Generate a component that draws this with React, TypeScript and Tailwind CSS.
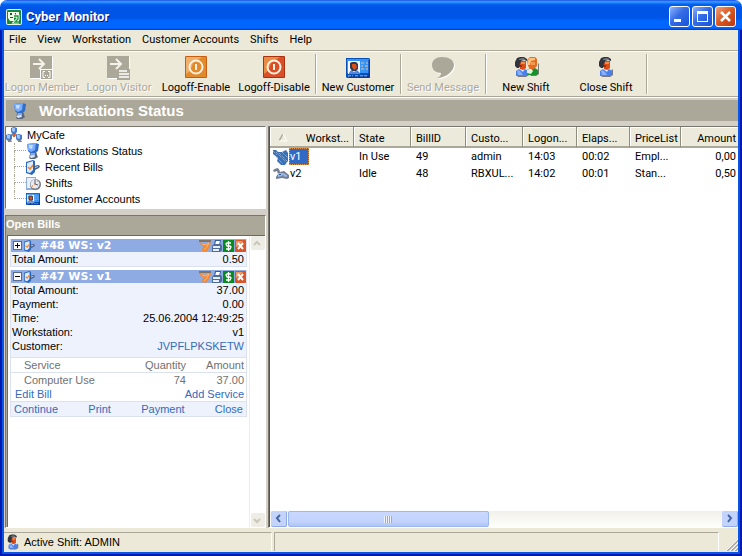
import React from 'react';
import clsx from 'clsx';

const PersonIcon = ({ className }: { className?: string }) => (
  <svg viewBox="0 0 16 20" className={className} aria-hidden="true">
    <path d="M4 20l-1-2 9-1 2-5 1 1v5l-3 2z" fill="#777a80" />
    <path d="M2 19v-5l3-2 3 2 3-2 3 2v4l-3 1z" fill="#4a80ea" />
    <path d="M3 14l2-1 2 2 2 3H4z" fill="#86b0ff" />
    <path d="M5 4h7v7l-3 2-3-1z" fill="#d94e16" />
    <path d="M7 5h4v2H7z" fill="#f38a48" />
    <path d="M5 8h3v2H5z" fill="#97300f" />
    <path d="M1 5l2-4 3-1h4l3 2v2l-3-1-3 1-1 3-1 4H3L1 9z" fill="#30343f" />
    <path d="M5 2l4-1 2 1v1H5z" fill="#777b83" />
    <path d="M7 13h3l-1 2z" fill="#e9f0ff" />
  </svg>
);

const BlondePersonIcon = ({ className }: { className?: string }) => (
  <svg viewBox="0 0 13 20" className={className} aria-hidden="true">
    <path d="M4 18l8-2V6l1 1v10l-3 2H5z" fill="#777a70" />
    <path d="M1 17v-4l3-2h5l3 2v4l-2 1H2z" fill="#16922a" />
    <path d="M1 13l4-2 2 3-2 3-4-1z" fill="#e4f2e0" />
    <path d="M1 3l3-3h5l2 2v7l-3 3H4L2 9z" fill="#e66b22" />
    <path d="M2 3l2-2h5v2l-4 1-1 4H2z" fill="#ffc27d" />
    <path d="M5 5h4v3H5z" fill="#f59a50" />
  </svg>
);

const MonitorIcon = ({ className }: { className?: string }) => (
  <svg viewBox="0 0 14 16" className={className} aria-hidden="true">
    <path d="M5 8h5l1 4 1 2-3 2H4l-1-2z" fill="#59657c" />
    <path d="M1 1l8-1 4 1-1 7-3 2H4L2 8z" fill="#326cc5" />
    <path d="M1 1l9-1-1 7-4 2-3-2z" fill="#79adff" />
    <path d="M3 2h4L6 6 3 5z" fill="#c6ddff" />
    <path d="M5 10h4v3H4z" fill="#86a8e4" />
    <path d="M3 13l5-1 1 2-4 1z" fill="#dce5f4" />
  </svg>
);

const NetworkIcon = ({ className }: { className?: string }) => (
  <svg viewBox="0 0 16 16" className={className} aria-hidden="true">
    <path d="M8 6L4 10M8 6l4 4" stroke="#7f8798" strokeWidth="2" />
    <path d="M5 1l3-1 3 1v4L9 7H7L5 5zM0 8l3-1 3 1v4l-2 2H2l-2-2zM10 8l3-1 3 1v4l-2 2h-2l-2-2z" fill="#4479cc" />
    <path d="M6 1h3v3L8 5 6 4zM1 8h3v3l-1 1-2-1zM11 8h3v3l-1 1-2-1z" fill="#9cc4ff" />
    <path d="M2 13h3l1 2H2zM12 13h3l1 2h-4z" fill="#7d8491" />
    <path d="M7 7h2v3H7z" fill="#df5a27" />
  </svg>
);

const BillIcon = ({ className }: { className?: string }) => (
  <svg viewBox="0 0 14 15" className={className} aria-hidden="true">
    <path d="M0 2l7-2 2 1v11l-3 3-6-2z" fill="#2867bd" />
    <path d="M1 3l6-2v9l-3 3-3-1z" fill="#dcebff" />
    <path d="M2 7l2 2 3-4" fill="none" stroke="#f18528" strokeWidth="1.5" />
    <path d="M7 9l1-3 4-1 2 1-1 2-4 2z" fill="#435d89" />
    <path d="M9 7l3-1v1L9 8z" fill="#c5dbff" />
  </svg>
);

const ClockIcon = ({ className }: { className?: string }) => (
  <svg viewBox="0 0 16 15" className={className} aria-hidden="true">
    <path d="M0 1h10v13H0z" fill="#8faddc" />
    <path d="M1 2h8v10H1z" fill="#e9f0fc" />
    <circle cx="9.5" cy="8.5" r="5.5" fill="#737983" />
    <circle cx="9" cy="8" r="4.5" fill="#e7e9ec" />
    <path d="M9 4v4l3 1" fill="none" stroke="#525e74" />
    <path d="M8 8h2M6 10h1M11 5h1" stroke="#ed6b24" />
  </svg>
);

const CardIcon = ({ className }: { className?: string }) => (
  <svg viewBox="0 0 24 20" preserveAspectRatio="none" className={className} aria-hidden="true">
    <path d="M0 0h23l1 1v19H1l-1-1z" fill="#0650b4" />
    <path d="M1 1h22v14H1z" fill="#3693f7" />
    <path d="M2 3h12v13H2z" fill="#f3f6fc" />
    <path d="M4 5l2-1h4l2 2v5l-2 2H6l-2-3z" fill="#303b50" />
    <path d="M6 6h4l1 4-3 2-2-3z" fill="#db5016" />
    <path d="M3 15l2-3 3 2 3-2 3 3v1H3z" fill="#5685dc" />
    <path d="M15 5h3M20 5h2M15 8h2M19 8h3M15 11h3M20 11h2" stroke="#edc28a" />
    <path d="M2 18h5M9 18h3M14 18h7" stroke="#bad7ff" strokeDasharray="3 1" />
    <path d="M23 2v17H3" fill="none" stroke="#052b91" />
  </svg>
);

const PowerIcon = ({ tone }: { tone: 'orange' | 'red' }) => (
  <svg viewBox="0 0 22 22" className="size-[22px]" aria-hidden="true">
    <rect width="22" height="22" rx="1" fill={tone === 'orange' ? '#c65f12' : '#a93210'} />
    <rect x="1" y="1" width="20" height="20" fill={tone === 'orange' ? '#e18b2d' : '#d95028'} />
    <path d="M1 1h16L8 7l-3 8-4 3z" fill={tone === 'orange' ? '#efb06d' : '#ea8c45'} />
    <circle cx="11" cy="11" r="6.5" fill="none" stroke="#fff0df" strokeWidth="2" />
    <path d="M11 8v6" stroke="#fff0df" strokeWidth="2" />
  </svg>
);

const LogonIcon = ({ visitor = false }: { visitor?: boolean }) => (
  <svg viewBox="0 0 24 24" className="size-6" aria-hidden="true">
    <path d="M1 1h22v22H1z" fill="#fff" />
    <path d="M0 0h22v22H0z" fill="#aca899" />
    <path d="M3 8h10M9 3l5 5-5 5" fill="none" stroke="#f5f3e8" strokeWidth="2" />
    {visitor ? (
      <>
        <path d="M10 13h13v11H10z" fill="#aca899" />
        <path d="M12 15h8M12 18h10M12 21h10" stroke="#fff" strokeWidth="1.5" />
      </>
    ) : (
      <>
        <path d="M10 13h13v11H10z" fill="#fff" />
        <path d="M11 14h11v9H11z" fill="#aca899" />
        <path d="M15 15.500h-2v6h2M18 15.500h2v6h-2M15 19.500h1M17 19.500h1" fill="none" stroke="#fff" />
      </>
    )}
  </svg>
);

const MessageIcon = () => (
  <svg viewBox="0 0 24 24" className="size-6" aria-hidden="true">
    <path d="M12 2c7 0 12 3 12 8 0 6-8 13-17 13 3-1 4-3 4-5-5 0-9-3-9-8s4-8 10-8z" fill="#fff" />
    <path d="M11 1c7 0 12 3 12 8 0 6-8 13-17 13 3-1 4-3 4-5-5 0-9-3-9-8s4-8 10-8z" fill="#aca899" />
  </svg>
);

const AppIcon = () => (
  <svg viewBox="0 0 16 16" className="size-4" aria-hidden="true">
    <rect width="16" height="16" rx="2" fill="#e7f5df" />
    <rect x="1" y="1" width="14" height="14" rx="1" fill="#138b37" />
    <path d="M2 3h11v5H8v4H4l-2-3z" fill="#f1fae9" />
    <path d="M4 4h2v2H4zM9 4h1v2H9zM4 8h3v1H4z" fill="#185c2b" />
    <path d="M8 7h4v3l-3 3h4" fill="none" stroke="#fff" strokeWidth="3" />
    <path d="M8 7h4v3l-3 3h4" fill="none" stroke="#149539" strokeWidth="1.3" />
  </svg>
);

const DeviceIcon = ({ active = false }: { active?: boolean }) => (
  <svg viewBox="0 0 16 16" className="size-4 shrink-0" aria-hidden="true">
    {active ? (
      <>
        <path d="M0 1h3l2 2h4l4-2 2 3v8l-3 4H8l-4-4 1-3-5-4z" fill="#3a70b8" />
        <path d="M0 2l4 4M3 3l11 11M6 4l8 8M9 3l6 6M3 8l7 7" stroke="#a6c2d9" strokeDasharray="1 1" />
      </>
    ) : (
      <>
        <path d="M0 4l4-2 2 1 1 3 4-1 5 4v3l-2 1-5-1-6 1v-2l2-3-1-3-3 1z" fill="#737d8d" />
        <path d="M5 7h5l4 2v2l-5-1-4 1z" fill="#98b9e8" />
        <path d="M9 9h2v1H9z" fill="#ec7936" />
        <path d="M6 8h2v1H6z" fill="#2e599c" />
      </>
    )}
  </svg>
);

const HandIcon = () => (
  <svg viewBox="0 0 12 12" className="size-3" aria-hidden="true">
    <path d="M0 0h12v2H0z" fill="#7c746d" />
    <path d="M0 2l3 1 3 1 5-2 1 1-2 5-3 4-4-1V9l2-2-3-2z" fill="#f28a35" />
    <path d="M3 4l3 1 4-2-2 4-3 3" fill="none" stroke="#ffb878" />
  </svg>
);

const PrinterIcon = () => (
  <svg viewBox="0 0 10 12" className="h-3 w-[10px]" aria-hidden="true">
    <path d="M3 0h6L8 5H2z" fill="#315c9e" />
    <path d="M4 1h4L7 5H3z" fill="#fff" />
    <path d="M0 6l2-2h7l1 2v4l-2 2H0z" fill="#506b94" />
    <path d="M1 6h7v2H1zM1 9h6v2H1z" fill="#e4edfb" />
  </svg>
);

const CashIcon = () => (
  <svg viewBox="0 0 11 12" className="h-3 w-[11px]" aria-hidden="true">
    <path d="M0 0h11v12H0z" fill="#098a20" />
    <path d="M8 3H4L3 4l1 2h3l1 1-1 2H3M5.500 1v10" fill="none" stroke="#fff" strokeWidth="1.300" />
  </svg>
);

const DismissIcon = () => (
  <svg viewBox="0 0 11 12" className="h-3 w-[11px]" aria-hidden="true">
    <rect width="11" height="12" rx="1" fill="#d85628" />
    <path d="M1 1h7L2 7H1z" fill="#ed9a60" />
    <path d="M3 3l5 6M8 3L3 9" stroke="#fff" strokeWidth="2" />
  </svg>
);

const Chevron = ({ path, color }: { path: string; color: string }) => (
  <svg viewBox="0 0 9 9" className="size-[9px]" aria-hidden="true">
    <path d={path} fill="none" stroke={color} strokeWidth="2" />
  </svg>
);

const menus = ['File', 'View', 'Workstation', 'Customer Accounts', 'Shifts', 'Help'];

type Tool = { label: string; icon: React.ReactNode; width: string; disabled?: boolean; divider?: boolean };

const tools: Tool[] = [
  { label: 'Logon Member', icon: <LogonIcon />, width: 'w-[74px]', disabled: true },
  { label: 'Logon Visitor', icon: <LogonIcon visitor />, width: 'w-[80px]', disabled: true },
  { label: 'Logoff-Enable', icon: <PowerIcon tone="orange" />, width: 'w-[74px]' },
  { label: 'Logoff-Disable', icon: <PowerIcon tone="red" />, width: 'w-[82px]', divider: true },
  { label: 'New Customer', icon: <CardIcon className="mt-[2px] h-5 w-6" />, width: 'w-[84px]', divider: true },
  { label: 'Send Message', icon: <MessageIcon />, width: 'w-[84px]', disabled: true, divider: true },
  {
    label: 'New Shift',
    icon: (
      <span className="flex pt-px">
        <PersonIcon className="h-5 w-4" />
        <BlondePersonIcon className="-ml-1 h-5 w-[13px]" />
      </span>
    ),
    width: 'w-[80px]',
  },
  { label: 'Close Shift', icon: <PersonIcon className="mt-px h-5 w-4" />, width: 'w-[80px]', divider: true },
];

const treeItems = [
  { label: 'Workstations Status', icon: <MonitorIcon className="h-4 w-[14px]" /> },
  { label: 'Recent Bills', icon: <BillIcon className="h-[15px] w-[14px]" /> },
  { label: 'Shifts', icon: <ClockIcon className="h-[15px] w-4" /> },
  { label: 'Customer Accounts', icon: <CardIcon className="h-3 w-[14px]" /> },
];

const columns = [
  { label: 'Workst...', width: 'w-[84px]' },
  { label: 'State', width: 'w-[57px]' },
  { label: 'BillID', width: 'w-[55px]' },
  { label: 'Custo...', width: 'w-[57px]' },
  { label: 'Logon...', width: 'w-[54px]' },
  { label: 'Elaps...', width: 'w-[53px]' },
  { label: 'PriceList', width: 'w-[51px]' },
  { label: 'Amount', width: 'w-auto' },
];

const rows = [
  ['v1', 'In Use', '49', 'admin', '14:03', '00:02', 'Empl...', '0,00'],
  ['v2', 'Idle', '48', 'RBXUL...', '14:02', '00:01', 'Stan...', '0,50'],
];

const TitleBar = () => (
  <header className="flex h-[30px] shrink-0 items-center rounded-t-[7px] bg-[linear-gradient(#0831d9_0,#3f96ff_1px,#2187ff_3px,#0562f0_4px,#0055e6_7px,#0055e6_18px,#0066ff_21px,#0066ff_28px,#0038cf_30px)] pt-[3px] pr-[6px] pl-[6px]">
    <AppIcon />
    <h1 className="ml-1 text-[13px] leading-4 font-bold text-white [text-shadow:1px_1px_#0a1883]">
      Cyber Monitor
    </h1>
    <div className="ml-auto flex gap-[2px]">
      {['Minimize', 'Maximize', 'Close'].map((name) => (
        <button
          key={name}
          aria-label={name}
          className={clsx(
            'flex size-[21px] items-center justify-center rounded-[3px] border border-white',
            name === 'Close'
              ? 'bg-[linear-gradient(135deg,#f0a07a,#d9571f_50%,#b93710)]'
              : 'bg-[linear-gradient(135deg,#8db2ff,#346be6_45%,#1754d8)]',
          )}
        >
          <svg viewBox="0 0 19 19" className="size-[19px]" aria-hidden="true">
            {name === 'Minimize' && <path d="M4 12h7v3H4z" fill="#fff" />}
            {name === 'Maximize' && <path d="M4 4h11v11H4zM5 7v7h9V7z" fill="#fff" fillRule="evenodd" />}
            {name === 'Close' && <path d="M5 5l9 9M14 5l-9 9" stroke="#fff" strokeWidth="2.500" />}
          </svg>
        </button>
      ))}
    </div>
  </header>
);

const Toolbar = () => (
  <div className="flex h-[44px] shrink-0 pt-[2px] pl-[1px]" role="toolbar">
    {tools.map((tool) => (
      <div
        key={tool.label}
        className={clsx('flex h-10', tool.divider && 'border-r border-[#aca899] shadow-[1px_0_white]')}
      >
        <button
          disabled={tool.disabled}
          className={clsx(
            'flex flex-col items-center justify-between pt-[2px] whitespace-nowrap',
            tool.width,
            tool.disabled && 'text-[#aca899] [text-shadow:1px_1px_white]',
          )}
        >
          {tool.icon}
          <span className="leading-[13px]">{tool.label}</span>
        </button>
      </div>
    ))}
  </div>
);

const NavTree = () => (
  <nav className="border border-[#77756c] border-r-white border-b-white bg-white pb-[1px] [font-family:'Liberation_Sans',Arial,sans-serif]">
    <div className="flex h-4 items-center gap-[5px]">
      <NetworkIcon className="size-4" />
      MyCafe
    </div>
    <ul className="ml-2">
      {treeItems.map((item, i) => (
        <li key={item.label} className="flex h-4 items-center">
          <span className="h-4 w-3">
            <span className="block h-2 border-b border-l border-dotted border-[#aca899]" />
            {i < treeItems.length - 1 && <span className="block h-2 border-l border-dotted border-[#aca899]" />}
          </span>
          <span className="flex w-[19px] justify-start">{item.icon}</span>
          <a href="#">{item.label}</a>
        </li>
      ))}
    </ul>
  </nav>
);

const Bill = ({ title, open = false, children }: { title: string; open?: boolean; children: React.ReactNode }) => (
  <article className="border border-t-0 border-[#dbe1ef] bg-[#eef2fd]">
    <header className="flex h-[13px] items-center bg-[#8eabe3]">
      <button
        aria-label={open ? 'Collapse' : 'Expand'}
        className="ml-[2px] flex size-[9px] items-center justify-center border border-[#5a6b8c] bg-white"
      >
        <svg viewBox="0 0 7 7" className="size-[7px]" aria-hidden="true">
          <path d={open ? 'M1 3h5v1H1z' : 'M1 3h5v1H1zM3 1h1v5H3z'} fill="#000" />
        </svg>
      </button>
      <BillIcon className="mx-[2px] h-3 w-[11px]" />
      <h3 className="ml-[3px] text-[11px] leading-3 font-bold text-white [font-family:'DejaVu_Sans',sans-serif]">
        {title}
      </h3>
      <div className="ml-auto flex gap-[1px]">
        <button aria-label="Continue"><HandIcon /></button>
        <button aria-label="Print"><PrinterIcon /></button>
        <button aria-label="Payment"><CashIcon /></button>
        <button aria-label="Close"><DismissIcon /></button>
      </div>
    </header>
    {children}
  </article>
);

const Field = ({ label, value, link = false }: { label: string; value: string; link?: boolean }) => (
  <div className="flex justify-between pr-[2px] pl-[1px]">
    <dt>{label}</dt>
    <dd>{link ? <a href="#" className="text-[#356abb]">{value}</a> : value}</dd>
  </div>
);

const OpenBills = () => (
  <section className="flex min-h-0 flex-1 flex-col border border-[#77756c] border-r-white border-b-white bg-[#aca899] [font-family:'Liberation_Sans',Arial,sans-serif]">
    <h2 className="pb-[3px] text-[11px] leading-4 font-bold text-white">Open Bills</h2>
    <div className="ml-[1px] flex min-h-0 flex-1 border-t border-l border-[#6b6961] bg-white">
      <div className="min-w-0 flex-1 space-y-[3px] pt-[3px] pr-[2px] pl-[2px] leading-[14px]">
        <Bill title="#48 WS: v2">
          <dl>
            <Field label="Total Amount:" value="0.50" />
          </dl>
        </Bill>
        <Bill title="#47 WS: v1" open>
          <dl className="pb-1">
            <Field label="Total Amount:" value="37.00" />
            <Field label="Payment:" value="0.00" />
            <Field label="Time:" value="25.06.2004 12:49:25" />
            <Field label="Workstation:" value="v1" />
            <Field label="Customer:" value="JVPFLPKSKETW" link />
          </dl>
          <table className="w-full table-fixed border-collapse bg-white text-right text-[#717171]">
            <thead>
              <tr className="h-[15px] border-y border-[#dbe1ef]">
                <th className="pl-[13px] text-left font-normal">Service</th>
                <th className="w-[60px] font-normal">Quantity</th>
                <th className="w-[60px] pr-[2px] font-normal">Amount</th>
              </tr>
            </thead>
            <tbody>
              <tr>
                <td className="pl-[13px] text-left">Computer Use</td>
                <td>74</td>
                <td className="pr-[2px]">37.00</td>
              </tr>
            </tbody>
          </table>
          <div className="flex justify-between bg-white pr-[2px] pl-1 text-[#356abb]">
            <a href="#">Edit Bill</a>
            <a href="#">Add Service</a>
          </div>
          <div className="flex justify-between border-t border-[#dbe1ef] pr-[3px] pl-[3px] text-[#356abb]">
            <a href="#">Continue</a>
            <a href="#">Print</a>
            <a href="#">Payment</a>
            <a href="#">Close</a>
          </div>
        </Bill>
      </div>
      <div className="flex w-[16px] flex-col justify-between border-l border-[#eeede5]">
        {['M1 6l3-3 3 3', 'M1 3l3 3 3-3'].map((path) => (
          <button
            key={path}
            aria-label={path.startsWith('M1 6') ? 'Scroll up' : 'Scroll down'}
            className="mx-auto flex size-[14px] items-center justify-center rounded-[2px] bg-[#eeede5]"
          >
            <Chevron path={path} color="#c9c7ba" />
          </button>
        ))}
      </div>
    </div>
  </section>
);

const WorkstationList = () => (
  <section className="flex min-w-0 flex-1 border border-r-0 border-[#77756c] border-b-white bg-white">
    <div className="flex min-w-0 flex-1 flex-col border-l border-[#55534c]">
      <table className="w-full table-fixed border-separate border-spacing-0 text-left">
        <thead>
          <tr className="h-[21px] bg-[#ebeadb]">
            {columns.map((column, i) => (
              <th
                key={column.label}
                className={clsx(
                  'border-r border-b-2 border-r-[#8f8c80] border-b-[#aca899] pt-[3px] font-normal whitespace-nowrap shadow-[inset_1px_1px_white]',
                  column.width,
                  i === 7 ? 'border-r-0 pr-[2px] text-right' : 'pl-[5px]',
                )}
              >
                {i === 0 ? (
                  <span className="flex items-center justify-between pr-1 pl-[4px]">
                    <svg viewBox="0 0 9 8" className="h-2 w-[9px]" aria-hidden="true">
                      <path d="M0 7l4-7" stroke="#aca899" strokeWidth="1.5" />
                      <path d="M4 0l4 7H0" fill="none" stroke="#fff" />
                    </svg>
                    {column.label}
                  </span>
                ) : (
                  column.label
                )}
              </th>
            ))}
          </tr>
        </thead>
        <tbody>
          {rows.map((row, i) => (
            <tr key={row[0]} className="h-[17px]">
              {row.map((cell, j) => (
                <td
                  key={j}
                  className={clsx('py-0 whitespace-nowrap', j === 0 ? 'pl-[3px]' : j === 7 ? 'pr-[2px] text-right' : 'pl-[5px]')}
                >
                  {j === 0 ? (
                    <span className="flex items-center">
                      <DeviceIcon active={i === 0} />
                      <span
                        className={clsx(
                          'h-[17px] leading-[15px]',
                          i === 0 ? 'w-5 border border-dotted border-[#e8964a] bg-[#316ac5] text-white' : 'pt-px pl-[1px]',
                        )}
                      >
                        {cell}
                      </span>
                    </span>
                  ) : (
                    cell
                  )}
                </td>
              ))}
            </tr>
          ))}
        </tbody>
      </table>
      <div className="mt-auto flex h-4 gap-[1px] bg-[linear-gradient(#f1f0ea,#fefefb)] pl-[1px]">
        <button aria-label="Scroll left" className="flex w-4 items-center justify-center rounded-[2px] border-r border-b border-[#8eabe8] bg-[#c3d3fc]">
          <Chevron path="M6 1L3 4l3 4" color="#4265a5" />
        </button>
        <div className="flex w-[43%] items-center justify-center gap-[1px] rounded-[2px] border border-[#9bb7ed] bg-[linear-gradient(#c8d8ff,#c3d3fc_70%,#adc5f7)]">
          {[0, 1, 2, 3].map((n) => (
            <span key={n} className="h-[7px] w-px bg-[#8cabed] shadow-[-1px_0_#eef4fe]" />
          ))}
        </div>
        <button aria-label="Scroll right" className="ml-auto flex w-4 items-center justify-center rounded-[2px] border-r border-b border-[#8eabe8] bg-[#c3d3fc]">
          <Chevron path="M3 1l3 3-3 4" color="#4265a5" />
        </button>
      </div>
    </div>
  </section>
);

const StatusBar = () => (
  <footer className="flex h-6 shrink-0 gap-[2px] pt-[4px] pb-[1px] leading-[18px] [font-family:'Liberation_Sans',Arial,sans-serif]">
    <div className="flex w-[268px] items-center gap-[5px] border-t border-r border-[#aca899] border-r-white pl-[3px]">
      <PersonIcon className="h-4 w-3" />
      Active Shift: ADMIN
    </div>
    <div className="flex-1 border border-b-0 border-[#aca899] border-r-white" />
    <div className="flex w-[17px] items-end justify-end">
      <svg viewBox="0 0 12 12" className="size-3" aria-hidden="true">
        <path d="M1 12L12 1M5 12l7-7M9 12l3-3" stroke="#aca899" strokeWidth="2" />
        <path d="M0 12L12 0M4 12l8-8M8 12l4-4" stroke="#fff" />
      </svg>
    </div>
  </footer>
);

export default function App() {
  return (
    <div className="flex h-screen flex-col overflow-hidden bg-white text-[11px] leading-[13px] text-black [font-family:Roboto,Tahoma,sans-serif]">
      <TitleBar />
      <div className="flex min-h-0 flex-1 flex-col border-x-2 border-b-2 border-[#0019b0]">
        <div className="flex min-h-0 flex-1 flex-col border-x-2 border-b-2 border-[#0855e8] bg-[#ece9d8]">
          <nav className="flex h-[20px] shrink-0 items-center gap-[11px] pb-[1px] pl-[5px]">
            {menus.map((menu) => (
              <button key={menu}>{menu}</button>
            ))}
          </nav>
          <div className="h-[2px] shrink-0 border-t border-[#aca899] bg-white" />
          <Toolbar />
          <div className="h-[2px] shrink-0 border-t border-[#aca899] bg-white" />
          <div className="flex min-h-0 flex-1 flex-col bg-[#d4d0c8] pt-[2px]">
            <div className="ml-[2px] flex h-[21px] shrink-0 items-center gap-[12px] bg-[#aca899] pl-[7px]">
              <MonitorIcon className="h-4 w-[14px]" />
              <h2 className="text-[15px] leading-5 font-bold text-white [font-family:'Liberation_Sans',Arial,sans-serif]">
                Workstations Status
              </h2>
            </div>
            <main className="flex min-h-0 flex-1 gap-[2px] pt-[5px] pl-[1px]">
              <aside className="flex w-[261px] shrink-0 flex-col gap-[6px]">
                <NavTree />
                <OpenBills />
              </aside>
              <WorkstationList />
            </main>
          </div>
          <StatusBar />
        </div>
      </div>
    </div>
  );
}
